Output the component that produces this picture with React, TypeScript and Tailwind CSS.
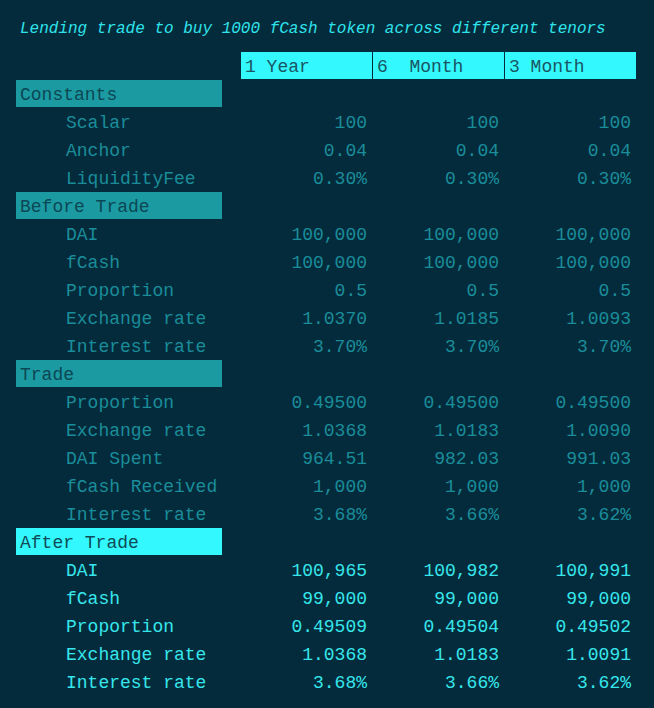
import React from "react";

type Row = { label: string; values: string[] };
type Section = { title: string; bright?: boolean; rows: Row[] };

const sections: Section[] = [
  {
    title: "Constants",
    rows: [
      { label: "Scalar", values: ["100", "100", "100"] },
      { label: "Anchor", values: ["0.04", "0.04", "0.04"] },
      { label: "LiquidityFee", values: ["0.30%", "0.30%", "0.30%"] },
    ],
  },
  {
    title: "Before Trade",
    rows: [
      { label: "DAI", values: ["100,000", "100,000", "100,000"] },
      { label: "fCash", values: ["100,000", "100,000", "100,000"] },
      { label: "Proportion", values: ["0.5", "0.5", "0.5"] },
      { label: "Exchange rate", values: ["1.0370", "1.0185", "1.0093"] },
      { label: "Interest rate", values: ["3.70%", "3.70%", "3.70%"] },
    ],
  },
  {
    title: "Trade",
    rows: [
      { label: "Proportion", values: ["0.49500", "0.49500", "0.49500"] },
      { label: "Exchange rate", values: ["1.0368", "1.0183", "1.0090"] },
      { label: "DAI Spent", values: ["964.51", "982.03", "991.03"] },
      { label: "fCash Received", values: ["1,000", "1,000", "1,000"] },
      { label: "Interest rate", values: ["3.68%", "3.66%", "3.62%"] },
    ],
  },
  {
    title: "After Trade",
    bright: true,
    rows: [
      { label: "DAI", values: ["100,965", "100,982", "100,991"] },
      { label: "fCash", values: ["99,000", "99,000", "99,000"] },
      { label: "Proportion", values: ["0.49509", "0.49504", "0.49502"] },
      { label: "Exchange rate", values: ["1.0368", "1.0183", "1.0091"] },
      { label: "Interest rate", values: ["3.68%", "3.66%", "3.62%"] },
    ],
  },
];

const tenors = ["1 Year", "6\u00a0 Month", "3 Month"];

export default function App() {
  return (
    <div
      className="w-[654px] h-[708px] bg-[#042b3b] overflow-hidden"
      style={{ fontFamily: '"Liberation Mono", "Courier New", monospace' }}
    >
      <div className="h-[52px] flex items-center pl-[20px] pt-[5px] text-[16px] italic text-[#2fe3ec] whitespace-pre">
        Lending trade to buy 1000 fCash token across different tenors
      </div>

      <div className="pl-[16px] text-[18px] leading-[24px] whitespace-pre">
        {/* tenor header */}
        <div className="flex mb-[1px]">
          <div className="w-[225px]" />
          <div className="flex gap-[1px]">
            {tenors.map((t) => (
              <div key={t} className="w-[131px] h-[27px] pt-[3px] bg-[#33f8fd] text-[#1a5564] pl-[4px]">
                {t}
              </div>
            ))}
          </div>
        </div>

        {sections.map((s) => (
          <div key={s.title}>
            <div
              className={`w-[206px] h-[27px] pt-[3px] mb-[1px] pl-[4px] ${
                s.bright ? "bg-[#33f8fd] text-[#0f4b58]" : "bg-[#1b9aa2] text-[#0c4754]"
              }`}
            >
              {s.title}
            </div>
            {s.rows.map((r) => (
              <div
                key={s.title + r.label}
                className={`flex h-[27px] pt-[3px] mb-[1px] ${s.bright ? "text-[#36e6ec]" : "text-[#1a8d9a]"}`}
              >
                <div className="w-[225px] pl-[50px]">{r.label}</div>
                <div className="flex gap-[1px]">
                  {r.values.map((v, i) => (
                    <div key={i} className="w-[131px] text-right pr-[5px]">
                      {v}
                    </div>
                  ))}
                </div>
              </div>
            ))}
          </div>
        ))}
      </div>
    </div>
  );
}
